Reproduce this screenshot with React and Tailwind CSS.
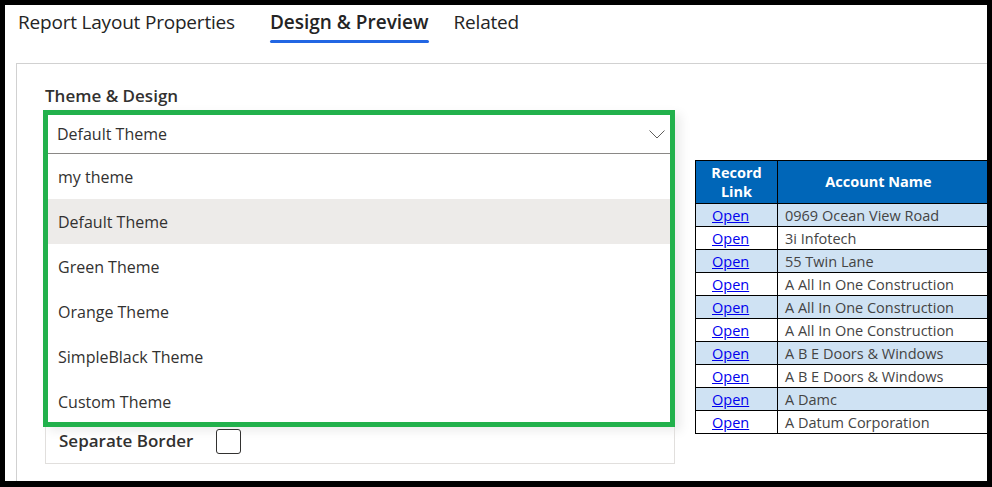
import React from "react";

const items = ["my theme", "Default Theme", "Green Theme", "Orange Theme", "SimpleBlack Theme", "Custom Theme"];
const rows = [
  "0969 Ocean View Road",
  "3i Infotech",
  "55 Twin Lane",
  "A All In One Construction",
  "A All In One Construction",
  "A All In One Construction",
  "A B E Doors & Windows",
  "A B E Doors & Windows",
  "A Damc",
  "A Datum Corporation",
];

export default function App() {
  return (
    <div className="w-[992px] h-[487px] overflow-hidden bg-white border-black border-t-[5px] border-l-[5px] border-r-[5px] border-b-[6px] font-['Open_Sans',sans-serif] text-[#323130]">
      {/* Tabs */}
      <div className="h-[58px] flex items-start pl-[13px] pt-[3px]">
        <div className="text-[19px] leading-[28px] text-[#242424] tracking-[-0.2px]">Report Layout Properties</div>
        <div className="ml-[35px] flex flex-col">
          <div className="text-[19px] leading-[28px] font-semibold text-[#242424]">Design &amp; Preview</div>
          <div className="mt-[4px] h-[3px] rounded-full bg-[#2266e3]"></div>
        </div>
        <div className="ml-[25px] text-[19px] leading-[28px] text-[#242424] tracking-[-0.2px]">Related</div>
      </div>

      {/* Card */}
      <div className="ml-[11px] h-[420px] border-t border-l border-[#d1d1d1] pl-[26px] pt-[20px] flex gap-[20px] overflow-hidden">
        <div className="w-[632px] shrink-0 flex flex-col">
          <div className="ml-[2px] text-[17px] leading-[24px] font-semibold text-[#323130]">Theme &amp; Design</div>
          <div className="mt-[2px] h-[317px] border-[5px] border-[#22b14c] overflow-hidden shadow-[6px_4px_10px_rgba(0,0,0,0.08)] bg-white flex flex-col">
            <div className="h-[39px] shrink-0 border-b border-[#8a8886] flex items-center justify-between pl-[9px] pr-[5px]">
              <span className="text-[16px]">Default Theme</span>
              <svg width="16" height="9" viewBox="0 0 16 9" fill="none">
                <path d="M0.5 0.5 L8 8 L15.5 0.5" stroke="#605e5c" strokeWidth="1" />
              </svg>
            </div>
            {items.map((t, i) => (
              <div
                key={i}
                className={`h-[45px] shrink-0 flex items-center pl-[10px] text-[16px] ${i === 1 ? "bg-[#edebe9]" : "bg-white"}`}
              >
                {t}
              </div>
            ))}
          </div>
          <div className="ml-[2px] w-[630px] h-[37px] border-l border-r border-b border-[#e1dfdd] flex items-start pt-[2px] pl-[13px]">
            <span className="w-[157px] text-[17px] leading-[24px] font-semibold text-[#323130]">Separate Border</span>
            <span className="w-[25px] h-[25px] rounded-[3px] border border-[#323130] bg-white"></span>
          </div>
        </div>

        <div className="mt-[76px] shrink-0">
          <table className="border-collapse text-[14.5px] font-['Open_Sans',sans-serif]">
            <thead>
              <tr className="bg-[#0066b8] text-white">
                <th className="w-[82px] h-[43px] border border-black font-bold leading-[19px] text-[14.5px] p-0">Record<br />Link</th>
                <th className="w-[220px] h-[43px] border border-black font-bold text-[14.5px] p-0 pr-[18px]">Account Name</th>
              </tr>
            </thead>
            <tbody>
              {rows.map((r, i) => (
                <tr key={i} className={i % 2 === 0 ? "bg-[#cfe2f3]" : "bg-white"}>
                  <td className="h-[23px] border border-black text-left p-0 pl-[16px] leading-[21px]">
                    <span className="text-[#0000ee] underline">Open</span>
                  </td>
                  <td className="h-[23px] border border-black pl-[7px] p-0 leading-[21px] text-[#444444] whitespace-nowrap">{r}</td>
                </tr>
              ))}
            </tbody>
          </table>
        </div>
      </div>
    </div>
  );
}
